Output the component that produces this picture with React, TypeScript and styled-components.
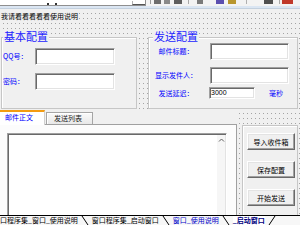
import styled, { createGlobalStyle } from 'styled-components';

// Toolbar fragments visible above the form designer (offset from previous, width, colour)
const toolBits = [
  { ml: 4, w: 1, c: '#9a9a9a' },
  { ml: 3, w: 7, c: '#6d6d6d' },
  { ml: 3, w: 6, c: '#8a8a8a' },
  { ml: 4, w: 8, c: '#5e5e5e' },
  { ml: 6, w: 1, c: '#a8a8a8' },
  { ml: 8, w: 6, c: '#7a7a7a' },
  { ml: 13, w: 8, c: '#5b4fb0' },
  { ml: 4, w: 8, c: '#b8962e' },
  { ml: 10, w: 1, c: '#b0b0b0' },
  { ml: 17, w: 9, c: '#4f4f4f' },
  { ml: 6, w: 1, c: '#a8a8a8' },
  { ml: 2, w: 11, c: '#c0392b' },
];

// The sheet bar is scrolled: the first tab only shows from its second character
const sheetTabs = [
  { label: '口程序集_窗口_使用说明', color: '#000', bold: false, active: false },
  { label: '窗口程序集_启动窗口', color: '#000', bold: false, active: false },
  { label: '窗口_使用说明', color: '#0000c8', bold: false, active: false },
  { label: '_启动窗口', color: '#000080', bold: true, active: true },
];

function App() {
  return (
    <Window>
      <GlobalStyle />
      <Toolbar>
        <ToolCombo>
          <ComboMarks>
            <Mark />
            <Mark />
          </ComboMarks>
          <ComboButton />
        </ToolCombo>
        {toolBits.map((b, i) => (
          <ToolBit key={i} $ml={b.ml} $w={b.w} $c={b.c} />
        ))}
      </Toolbar>
      <Band />
      <Canvas>
        <Hint>我请看看看看看使用说明</Hint>
        <TopRow>
          <GroupBox $w={136} $pad="10px 0 0 1px">
            <GroupTitle $x={1}>基本配置</GroupTitle>
            <FieldRow $top={0}>
              <FieldLabel $w={32}>QQ号：</FieldLabel>
              <TextInput $w={80} $h={17} />
            </FieldRow>
            <FieldRow $top={8}>
              <FieldLabel $w={32}>密码：</FieldLabel>
              <TextInput $w={80} $h={17} />
            </FieldRow>
          </GroupBox>
          <GroupBox $w={150} $pad="5px 0 0 4px">
            <GroupTitle $x={4}>发送配置</GroupTitle>
            <FieldRow $top={0}>
              <FieldLabel $w={46} $center>邮件标题：</FieldLabel>
              <TextInput $w={79} $h={17} $ml={11} />
            </FieldRow>
            <FieldRow $top={7}>
              <FieldLabel $w={46} $center>显示发件人：</FieldLabel>
              <TextInput $w={79} $h={17} $ml={11} />
            </FieldRow>
            <FieldRow $top={3}>
              <FieldLabel $w={46} $center>发送延迟：</FieldLabel>
              <TextInput $w={46} $h={12} $ml={10}>3000</TextInput>
              <Unit>毫秒</Unit>
            </FieldRow>
          </GroupBox>
        </TopRow>
        <BottomRow>
          <TabControl>
            <TabStrip>
              <Tab $active $w={45} $pl={5}>邮件正文</Tab>
              <Tab $w={47} $pl={7}>发送列表</Tab>
            </TabStrip>
            <TabPanel>
              <MemoBox>
                <ScrollTrack>
                  <svg width="7" height="4" viewBox="0 0 7 4">
                    <path d="M1 3.5 L3.5 1 L6 3.5" fill="none" stroke="#606060" strokeWidth="1" />
                  </svg>
                </ScrollTrack>
              </MemoBox>
            </TabPanel>
          </TabControl>
          <ButtonFrame>
            <PushButton>导入收件箱</PushButton>
            <PushButton>保存配置</PushButton>
            <PushButton>开始发送</PushButton>
          </ButtonFrame>
        </BottomRow>
      </Canvas>
      <SheetBar>
        {sheetTabs.map((t, i) => (
          <SheetItem key={t.label}>
            <SheetTab $color={t.color} $bold={t.bold} $active={t.active}>
              {t.label}
            </SheetTab>
            <svg width="8" height="9" viewBox="0 0 8 9">
              {i === sheetTabs.length - 1 ? (
                <line x1="7" y1="0" x2="1" y2="9" stroke="#000" strokeWidth="1" />
              ) : (
                <line x1="1" y1="0" x2="7" y2="9" stroke="#000" strokeWidth="1" />
              )}
            </svg>
          </SheetItem>
        ))}
      </SheetBar>
    </Window>
  );
}

const GlobalStyle = createGlobalStyle`
  html, body {
    margin: 0;
    padding: 0;
  }
  body {
    width: 300px;
    height: 225px;
    overflow: hidden;
    background: #f0f0f0;
    font-family: "Noto Sans CJK SC", "Liberation Sans", sans-serif;
  }
`;

const Window = styled.div`
  width: 300px;
  height: 225px;
  display: flex;
  flex-direction: column;
  overflow: hidden;
  background: #f0f0f0;
`;

const Toolbar = styled.div`
  height: 6px;
  flex-shrink: 0;
  display: flex;
  align-items: stretch;
  background: #f3f3f3;
  overflow: hidden;
`;

const ToolCombo = styled.div`
  width: 146px;
  flex-shrink: 0;
  box-sizing: border-box;
  background: #fff;
  border-bottom: 1px solid #8f8f8f;
  border-right: 1px solid #8f8f8f;
  display: flex;
  justify-content: space-between;
  align-items: flex-end;
`;

const ComboMarks = styled.div`
  display: flex;
  gap: 6px;
  margin-left: 47px;
`;

const Mark = styled.span`
  width: 2px;
  height: 2px;
  background: #333;
`;

const ComboButton = styled.div`
  width: 12px;
  height: 3px;
  border-bottom: 1px solid #555;
  border-left: 1px solid #b0b0b0;
`;

const ToolBit = styled.span<{ $ml: number; $w: number; $c: string }>`
  flex-shrink: 0;
  margin-left: ${(p) => p.$ml}px;
  width: ${(p) => p.$w}px;
  height: 4px;
  background: ${(p) => p.$c};
`;

const Band = styled.div`
  height: 3px;
  flex-shrink: 0;
  background: #dbe6f3;
  border-bottom: 1px solid #c3d0de;
  box-sizing: border-box;
`;

const Canvas = styled.div`
  flex: 1;
  min-height: 0;
  display: flex;
  flex-direction: column;
  overflow: hidden;
  background-color: #f0f0f0;
  background-image: linear-gradient(to right, #f0f0f0 3px, transparent 3px),
    linear-gradient(to bottom, #f0f0f0 4px, #a4a4a4 4px);
  background-size: 4px 5px;
`;

const Hint = styled.div`
  align-self: flex-start;
  margin: 2px 0 0 1px;
  padding-right: 1px;
  height: 10px;
  line-height: 10px;
  font-size: 7px;
  color: #000;
  background: #f0f0f0;
`;

const TopRow = styled.div`
  display: flex;
  justify-content: space-between;
  margin-top: 16px;
  padding: 0 2px 0 1px;
  flex-shrink: 0;
`;

const GroupBox = styled.div<{ $w: number; $pad: string }>`
  position: relative;
  width: ${(p) => p.$w}px;
  height: 72px;
  box-sizing: border-box;
  border: 1px solid #c6c6c6;
  box-shadow: inset 1px 1px 0 #fff;
  background: #f0f0f0;
  padding: ${(p) => p.$pad};
  display: flex;
  flex-direction: column;
`;

const GroupTitle = styled.div<{ $x: number }>`
  position: absolute;
  top: -8px;
  left: ${(p) => p.$x}px;
  padding: 0 1px;
  background: #f0f0f0;
  font-size: 11px;
  line-height: 13px;
  color: #2323ff;
`;

const FieldRow = styled.div<{ $top: number }>`
  display: flex;
  align-items: center;
  margin-top: ${(p) => p.$top}px;
`;

const FieldLabel = styled.div<{ $w: number; $center?: boolean }>`
  width: ${(p) => p.$w}px;
  flex-shrink: 0;
  text-align: ${(p) => (p.$center ? 'center' : 'left')};
  white-space: nowrap;
  font-size: 7px;
  line-height: 9px;
  color: #0000ff;
`;

const TextInput = styled.div<{ $w: number; $h: number; $ml?: number }>`
  width: ${(p) => p.$w}px;
  height: ${(p) => p.$h}px;
  margin-left: ${(p) => p.$ml ?? 0}px;
  flex-shrink: 0;
  box-sizing: border-box;
  background: #fff;
  border: 1px solid;
  border-color: #a0a0a0 #fff #fff #a0a0a0;
  box-shadow: inset 1px 1px 0 #696969, inset -1px -1px 0 #e3e3e3;
  padding-left: 1px;
  font-family: "Liberation Sans", sans-serif;
  font-size: 7px;
  line-height: ${(p) => p.$h - 2}px;
  color: #000;
`;

const Unit = styled.span`
  margin-left: 14px;
  font-size: 7px;
  line-height: 9px;
  color: #0000ff;
`;

const BottomRow = styled.div`
  flex: 1;
  min-height: 0;
  display: flex;
  margin-top: 1px;
`;

const TabControl = styled.div`
  width: 237px;
  flex-shrink: 0;
  display: flex;
  flex-direction: column;
  background: #f0f0f0;
`;

const TabStrip = styled.div`
  height: 14px;
  flex-shrink: 0;
  display: flex;
  align-items: flex-end;
`;

const Tab = styled.div<{ $active?: boolean; $w: number; $pl: number }>`
  position: relative;
  z-index: 1;
  width: ${(p) => p.$w}px;
  box-sizing: border-box;
  padding-left: ${(p) => p.$pl}px;
  font-size: 7px;
  white-space: nowrap;
  ${(p) =>
    p.$active
      ? `
    height: 15px;
    margin-bottom: -1px;
    background: #fff;
    border-top: 2px solid #f39c12;
    border-right: 1px solid #d0d0d0;
    color: #0000ff;
    line-height: 11px;
  `
      : `
    height: 12px;
    margin-left: 1px;
    background: linear-gradient(#fafafa, #e8e8e8);
    border: 1px solid #a5a5a5;
    border-bottom: none;
    box-shadow: inset 1px 1px 0 #fff;
    color: #222;
    line-height: 11px;
  `}
`;

const TabPanel = styled.div`
  flex: 1;
  min-height: 0;
  overflow: hidden;
  background: #fcfcfc;
  border-top: 1px solid #a0a0a0;
  border-right: 1px solid #a0a0a0;
  padding: 8px 0 0 7px;
`;

const MemoBox = styled.div`
  width: 220px;
  height: 100px;
  box-sizing: border-box;
  background: #fff;
  border: 1px solid;
  border-color: #a0a0a0 #fff #fff #a0a0a0;
  box-shadow: inset 1px 1px 0 #696969, inset -1px -1px 0 #e3e3e3;
  display: flex;
  justify-content: flex-end;
  padding: 1px;
`;

const ScrollTrack = styled.div`
  width: 8px;
  background: #f6f6f6;
  display: flex;
  justify-content: center;
  padding-top: 3px;
`;

const ButtonFrame = styled.div`
  width: 56px;
  flex-shrink: 0;
  box-sizing: border-box;
  margin: 15px 0 -3px 5px;
  border: 1px solid #c6c6c6;
  box-shadow: inset 1px 1px 0 #fff;
  background: #f0f0f0;
  padding: 7px 0 0 4px;
  display: flex;
  flex-direction: column;
  gap: 11px;
`;

const PushButton = styled.div`
  width: 48px;
  height: 17px;
  box-sizing: border-box;
  display: flex;
  align-items: center;
  justify-content: center;
  background: #f0f0f0;
  border: 1px solid;
  border-color: #fff #696969 #696969 #fff;
  box-shadow: inset -1px -1px 0 #a0a0a0, inset 1px 1px 0 #e3e3e3;
  font-size: 7px;
  color: #000;
  white-space: nowrap;
`;

const SheetBar = styled.div`
  height: 10px;
  flex-shrink: 0;
  box-sizing: border-box;
  border-top: 1px solid #000;
  background: #f7f7f7;
  display: flex;
  align-items: stretch;
  overflow: hidden;
  white-space: nowrap;
`;

const SheetItem = styled.div`
  display: flex;
  align-items: stretch;
  flex-shrink: 0;

  svg {
    margin: 0 3px;
  }
`;

const SheetTab = styled.span<{ $color: string; $bold: boolean; $active: boolean }>`
  font-size: 7px;
  line-height: 9px;
  color: ${(p) => p.$color};
  font-weight: ${(p) => (p.$bold ? 700 : 400)};
  background: ${(p) => (p.$active ? '#fff' : 'transparent')};
`;

export default App;
